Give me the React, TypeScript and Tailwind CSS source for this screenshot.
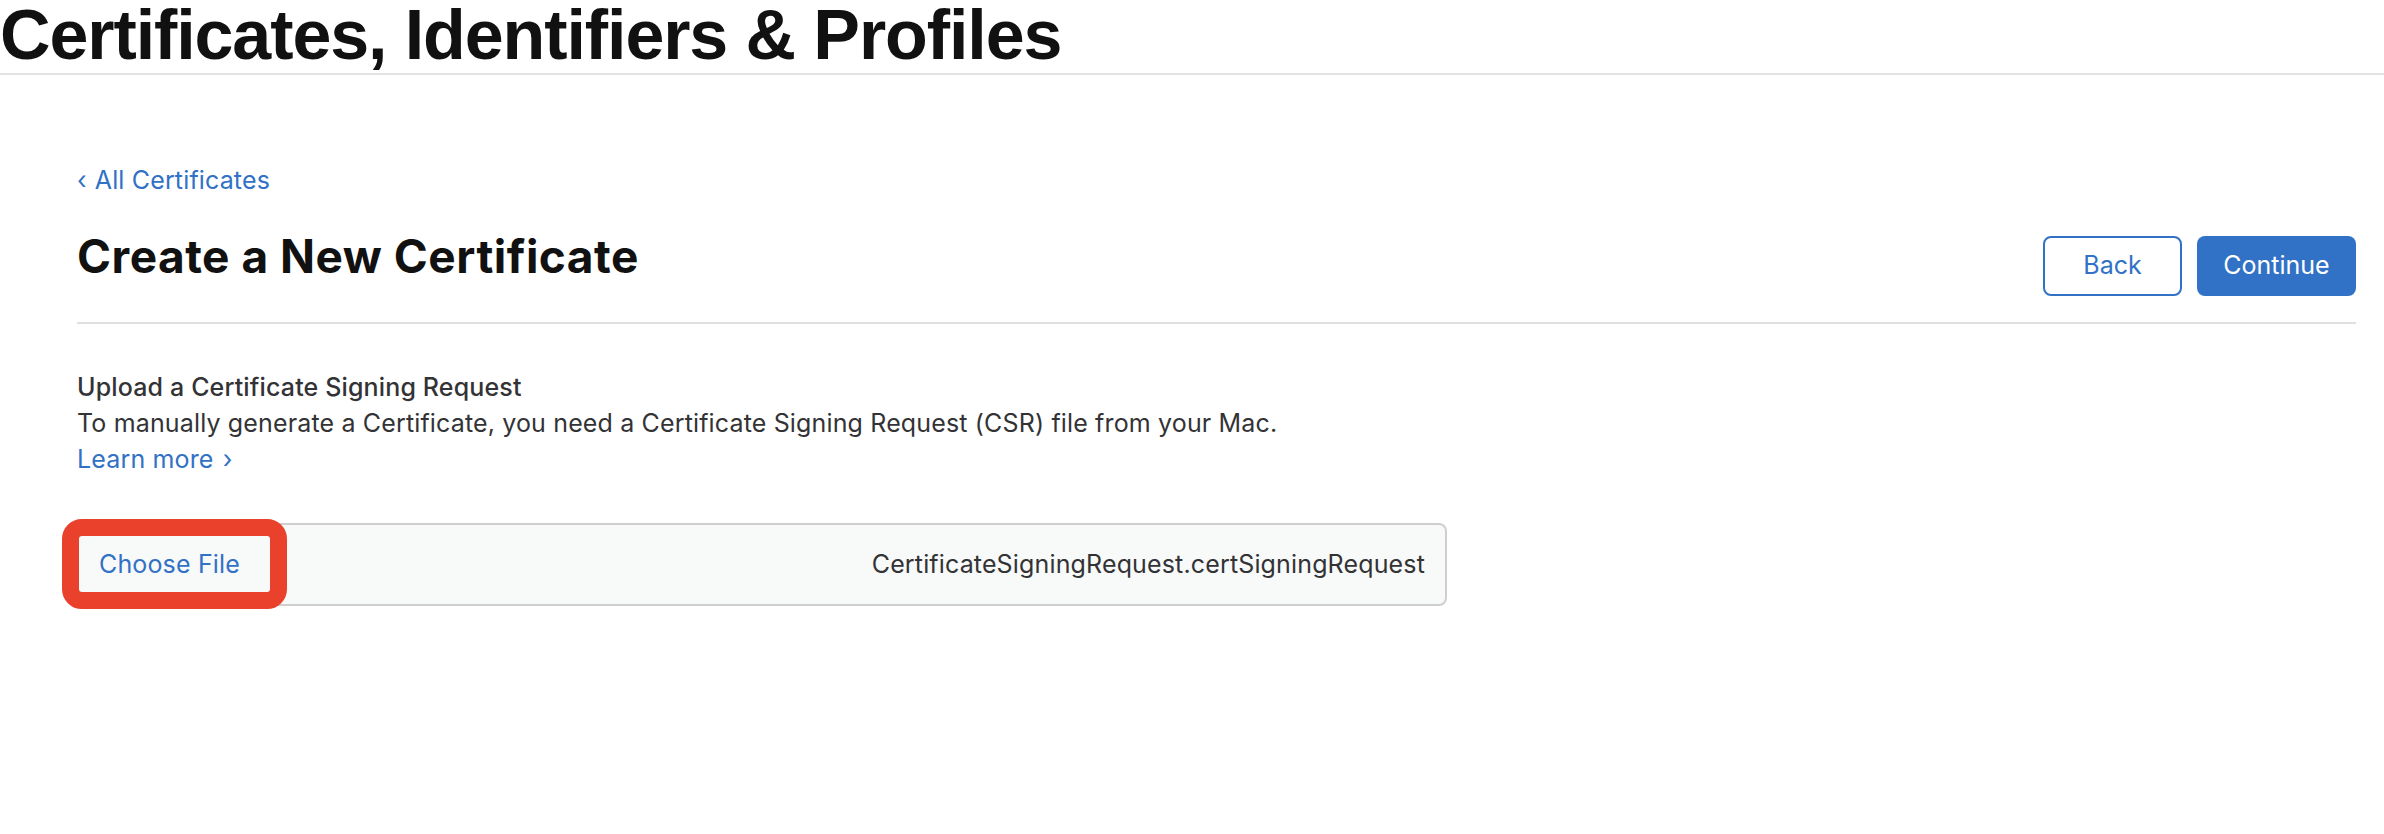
export default function App() {
  return (
    <div className="min-h-screen bg-white font-['Inter',sans-serif] text-[#333336]">
      {/* page header */}
      <header className="h-[75px] border-b-2 border-[#e3e3e3]">
        <h1 className="font-['Liberation_Sans',Arial,sans-serif] text-[70px] leading-[70px] font-bold tracking-[-1.1px] text-[#111111] whitespace-nowrap">
          Certificates, Identifiers &amp; Profiles
        </h1>
      </header>

      <main className="pl-[77px] pr-[28px]">
        <a href="#" className="mt-[90px] block text-[25px] leading-[30px] tracking-[0.15px] text-[#3171c6]">
          <span className="mr-[8px]">‹</span>All Certificates
        </a>

        <div className="mt-[33px] flex items-start justify-between border-b-2 border-[#e0e0e0] pb-[26px]">
          <h2 className="text-[46px] leading-[56px] font-bold tracking-[0.5px] text-[#111111]">
            Create a New Certificate
          </h2>
          <div className="mt-[8px] flex gap-[15px]">
            <button className="h-[60px] w-[139px] rounded-[8px] border-2 border-[#3171c6] bg-white text-[25px] text-[#3171c6]">
              Back
            </button>
            <button className="h-[60px] w-[159px] rounded-[8px] bg-[#3171c6] text-[25px] text-white">
              Continue
            </button>
          </div>
        </div>

        <section className="mt-[45px] text-[25px] leading-[36px] tracking-[0.15px]">
          <p className="font-medium">Upload a Certificate Signing Request</p>
          <p>
            To manually generate a Certificate, you need a Certificate Signing Request (CSR) file from your
            Mac.
          </p>
          <a href="#" className="text-[#3171c6]">
            Learn more <span className="ml-[2px]">›</span>
          </a>
        </section>

        <div className="relative mt-[46px] flex h-[83px] w-[1370px] items-center justify-between rounded-[8px] border-2 border-[#cfcfcf] bg-[#f8f9f9] pl-[20px] pr-[20px] text-[25px] tracking-[0.15px]">
          <span className="text-[#3171c6]">Choose File</span>
          <span className="text-[#333336]">CertificateSigningRequest.certSigningRequest</span>
          {/* annotation highlight */}
          <div className="pointer-events-none absolute left-[-17px] top-[-6px] h-[90px] w-[225px] rounded-[20px] border-[17px] border-[#e9412b]" />
        </div>
      </main>
    </div>
  );
}
